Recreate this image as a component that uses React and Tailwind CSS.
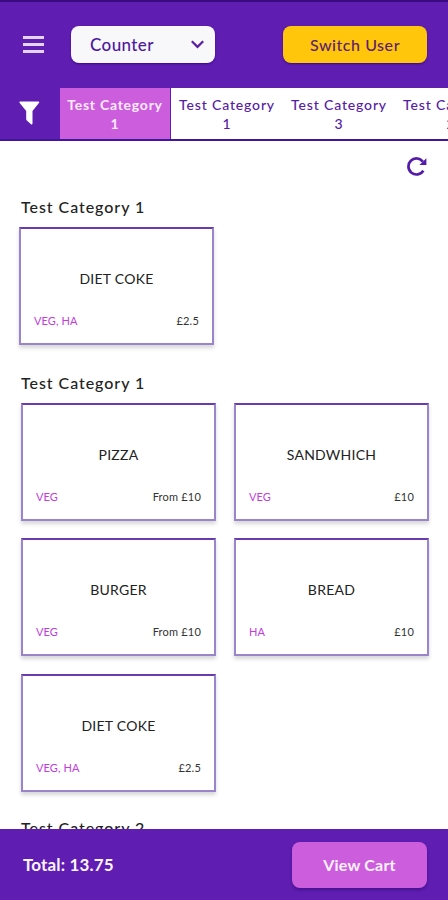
import React from "react";

const categories = [
  { name: "Test Category", number: "1" },
  { name: "Test Category", number: "1" },
  { name: "Test Category", number: "3" },
  { name: "Test Category", number: "2" },
];

const firstSection = [{ name: "DIET COKE", tags: "VEG, HA", price: "£2.5" }];

const secondSection = [
  { name: "PIZZA", tags: "VEG", price: "From £10" },
  { name: "SANDWHICH", tags: "VEG", price: "£10" },
  { name: "BURGER", tags: "VEG", price: "From £10" },
  { name: "BREAD", tags: "HA", price: "£10" },
  { name: "DIET COKE", tags: "VEG, HA", price: "£2.5" },
];

function Header() {
  return (
    <header className="flex h-[88px] shrink-0 items-center border-t-2 border-[#3a0a80] pb-[1px] pl-[23px] pr-[21px]">
      <button className="flex w-[21px] flex-col gap-[4px]">
        <span className="h-[3px] w-full bg-[#e4d3f6]" />
        <span className="h-[3px] w-full bg-[#e4d3f6]" />
        <span className="h-[3px] w-full bg-[#e4d3f6]" />
      </button>
      <button className="ml-[27px] flex h-[37px] w-[144px] items-center justify-between rounded-lg bg-[#f8f7fa] pl-[19px] pr-[11px] shadow-[0_1px_2px_#3b0a8a]">
        <span className="text-[17px] font-medium tracking-[0.4px] text-[#4b1a9e]">Counter</span>
        <svg width="13" height="9" viewBox="0 0 13 9" fill="none">
          <path d="M.8 1.2L6.5 6.9L12.2 1.2" stroke="#5a1fa6" strokeWidth="2.2" />
        </svg>
      </button>
      <button className="ml-auto h-[37px] w-[144px] rounded-lg bg-[#ffc60b] text-[16px] font-medium tracking-[0.55px] text-[#5c2070] shadow-[0_1px_2px_#3b0a8a]">
        Switch User
      </button>
    </header>
  );
}

function CategoryBar() {
  return (
    <nav className="flex h-[53px] shrink-0 overflow-hidden border-b-2 border-[#4314a0]">
      <button className="flex w-[60px] shrink-0 items-center justify-center pb-[2px] pr-[1px]">
        <svg width="21" height="24" viewBox="0 0 21 24" fill="#fff">
          <path d="M1.2 .6H19.4Q20.8 .8 19.9 2.1L13.5 10V22.6Q13.3 24 12 23.2L7.8 19.4Q7.2 18.8 7.2 18V10L.7 2.1Q-.2 .8 1.2 .6Z" />
        </svg>
      </button>
      {categories.map((c, i) => (
        <button
          key={i}
          className={`h-full shrink-0 whitespace-nowrap pt-[1px] text-[14px] leading-[19px] ${
            i === 0
              ? "mr-px w-[110px] bg-[#cc5ddd] font-bold tracking-[0.75px] text-[#fdeaff]"
              : "w-[112px] bg-white font-medium tracking-[0.85px] text-[#5620a4]"
          }`}
        >
          {c.name}
          <br />
          {c.number}
        </button>
      ))}
    </nav>
  );
}

function ItemCard({ item }) {
  return (
    <div className="flex h-[118px] w-[195px] flex-col border-2 border-[#9a85cc] border-t-[#6a3bb0] bg-white px-[13px] shadow-[0_3px_4px_rgba(0,0,0,0.16)]">
      <div className="mt-[40px] text-center text-[14px] leading-[20px] tracking-[0.25px] text-[#222]">{item.name}</div>
      <div className="mt-[24px] flex justify-between text-[11px] leading-[16px]">
        <span className="tracking-[0.1px] text-[#c23ddb]">{item.tags}</span>
        <span className="tracking-[0.2px] text-[#333]">{item.price}</span>
      </div>
    </div>
  );
}

function SectionTitle({ children }) {
  return <h2 className="h-[24px] text-[16px] font-medium leading-[24px] tracking-[0.95px] text-[#222]">{children}</h2>;
}

export default function App() {
  return (
    <div className="flex h-[900px] w-[448px] flex-col overflow-hidden bg-[#5f1db1] font-['Lato',sans-serif]">
      <Header />
      <CategoryBar />

      <main className="min-h-0 flex-1 overflow-hidden bg-white pl-[21px] pr-[19px]">
        <div className="flex h-[54px] justify-end pr-[1px] pt-[15px]">
          <svg width="21" height="21" viewBox="0 0 21 21" fill="none">
            <path d="M16.3 14.6A8 8 0 1 1 15.8 5.6" stroke="#541ba8" strokeWidth="2.7" />
            <path d="M19.4 2.2V9H12.4Z" fill="#541ba8" />
          </svg>
        </div>

        <SectionTitle>Test Category 1</SectionTitle>
        <div className="-ml-[2px] mt-[8px]">
          {firstSection.map((item) => (
            <ItemCard key={item.name} item={item} />
          ))}
        </div>

        <div className="mt-[26px]">
          <SectionTitle>Test Category 1</SectionTitle>
        </div>
        <div className="mt-[8px] grid grid-cols-[195px_195px] gap-x-[18px] gap-y-[17.4px]">
          {secondSection.map((item) => (
            <ItemCard key={item.name} item={item} />
          ))}
        </div>

        <div className="mt-[24px]">
          <SectionTitle>Test Category 2</SectionTitle>
        </div>
      </main>

      <footer className="flex h-[71px] shrink-0 items-center justify-between pl-[23px] pr-[21px]">
        <span className="text-[17px] font-bold tracking-[0.15px] text-[#fbf3ff]">Total: 13.75</span>
        <button className="h-[46px] w-[135px] rounded-lg bg-[#cc5ddd] text-[16px] font-bold tracking-[0.2px] text-[#fff3ff] shadow-[0_2px_3px_#47128f]">
          View Cart
        </button>
      </footer>
    </div>
  );
}
